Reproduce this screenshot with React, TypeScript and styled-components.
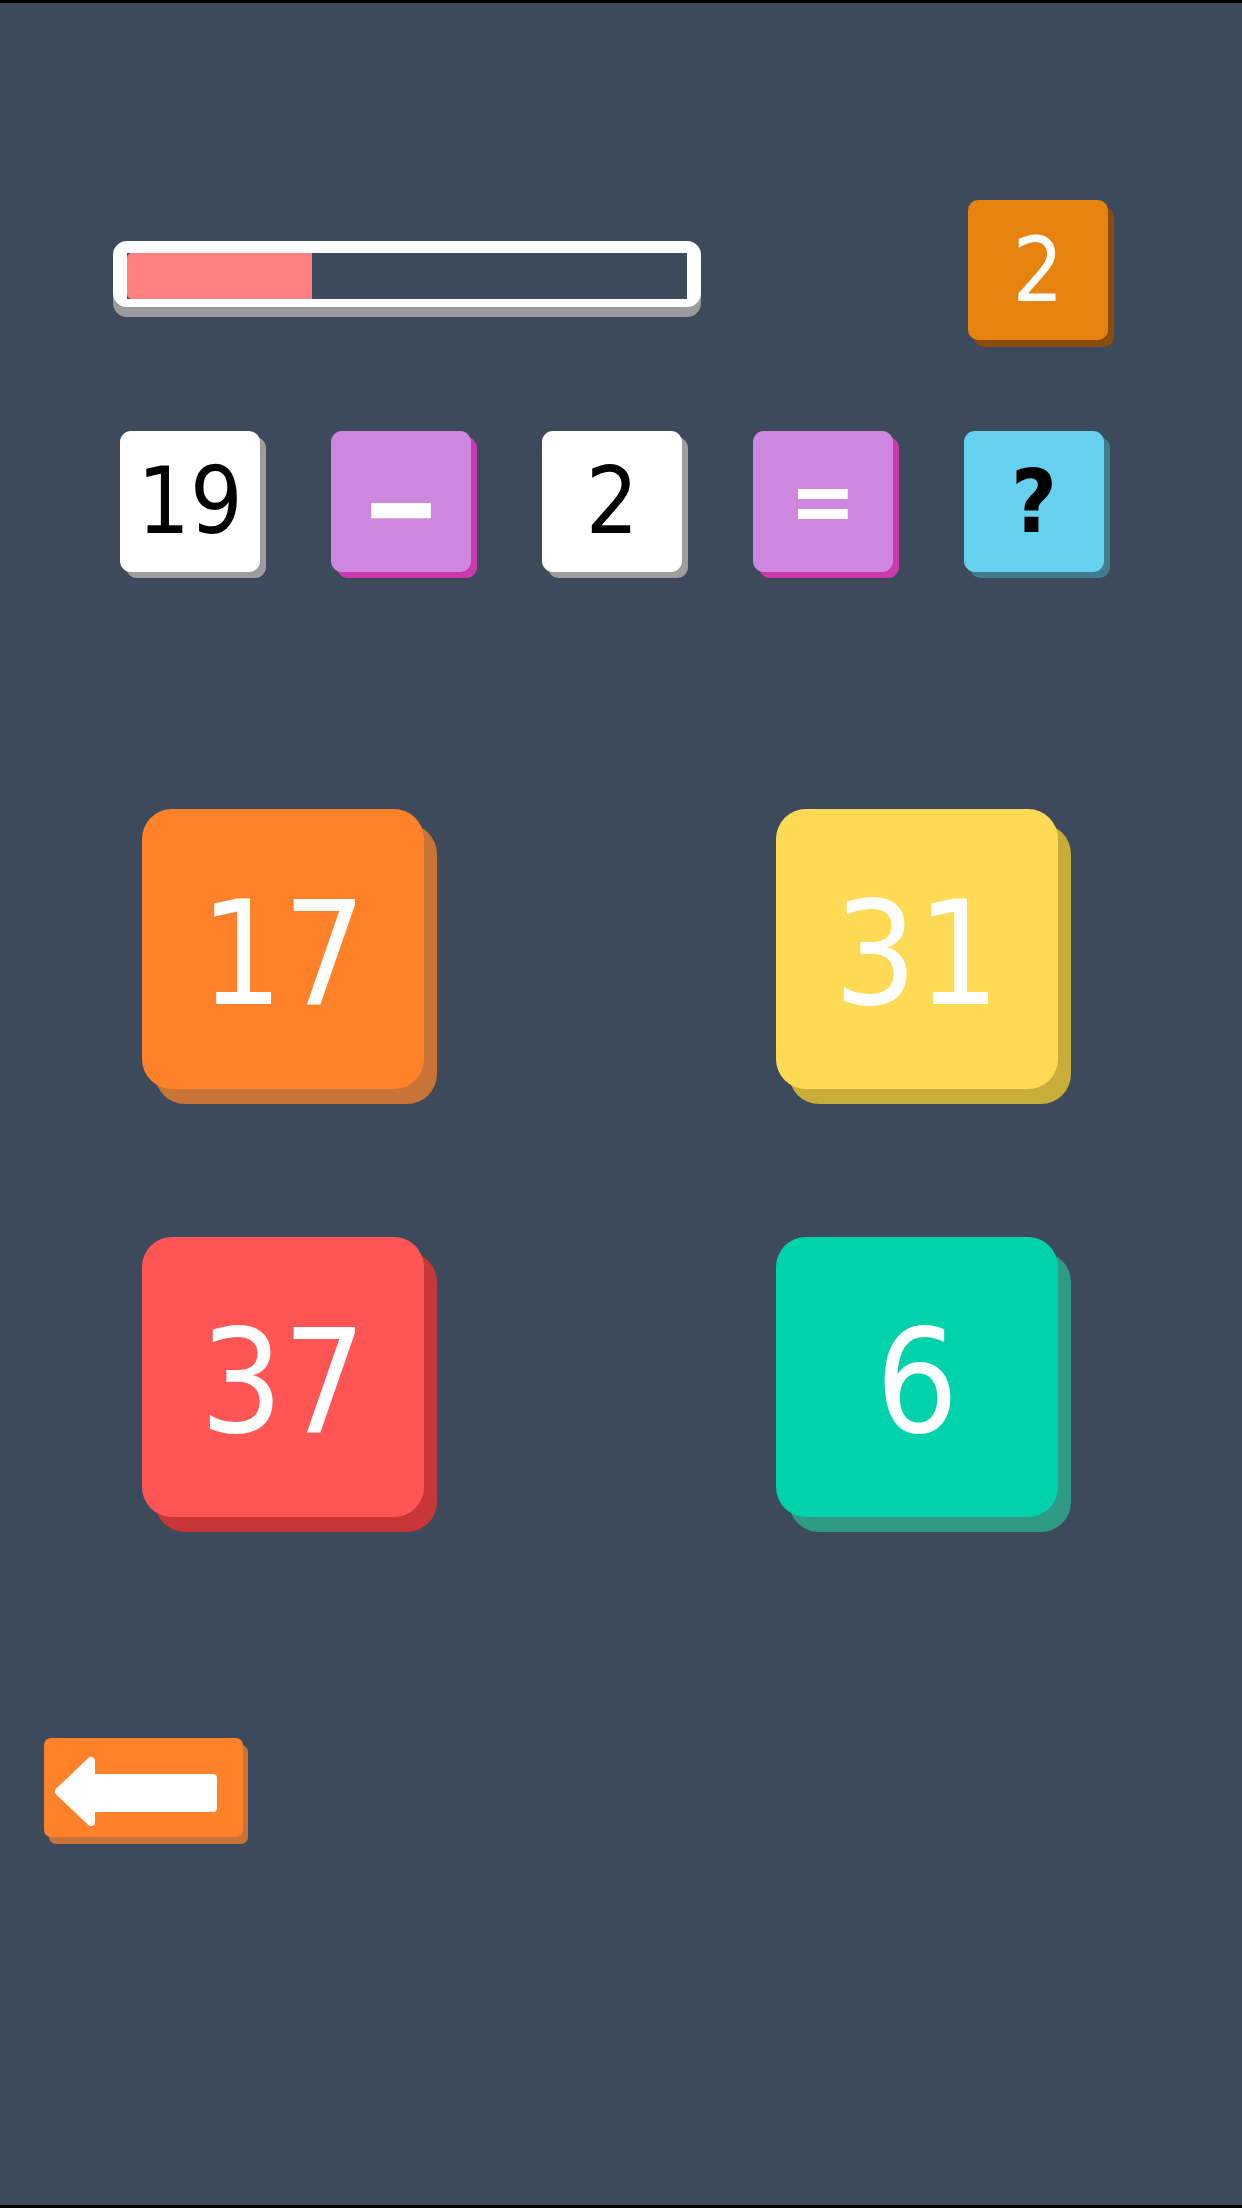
import styled, { createGlobalStyle } from "styled-components";

const GlobalStyle = createGlobalStyle`
  html, body {
    margin: 0;
    padding: 0;
    background: #3d4a5b;
  }
`;

const Screen = styled.div`
  width: 1242px;
  height: 2208px;
  box-sizing: border-box;
  border-top: 3px solid #000;
  border-bottom: 3px solid #000;
  background: #3d4a5b;
  display: flex;
  flex-direction: column;
  font-family: "DejaVu Sans", "Liberation Sans", sans-serif;
  font-stretch: condensed;
`;

const Header = styled.div`
  display: flex;
  align-items: center;
  padding: 197px 0 0 113px;
`;

const ProgressTrack = styled.div`
  width: 588px;
  height: 66px;
  margin-top: 8px;
  box-sizing: border-box;
  border-style: solid;
  border-color: #fff;
  border-width: 12px 14px 8px 14px;
  border-radius: 14px;
  background: #3d4a5b;
  box-shadow: 0 10px 0 #9b9b9b;
  overflow: hidden;
  display: flex;
`;

const ProgressFill = styled.div<{ $pct: number }>`
  width: ${(p) => p.$pct}%;
  height: 100%;
  background: #ff8080;
  border-radius: 5px 0 0 5px;
`;

const Block = styled.div<{ $bg: string; $shade: string }>`
  display: flex;
  align-items: center;
  justify-content: center;
  flex-shrink: 0;
  box-sizing: border-box;
  background: ${(p) => p.$bg};
  line-height: 1;
  user-select: none;
`;

const ScoreBadge = styled(Block)`
  width: 140px;
  height: 140px;
  margin-left: 267px;
  border-radius: 10px;
  box-shadow: 6px 7px 0 ${(p) => p.$shade};
  color: #fff;
  font-size: 89px;
`;

const Equation = styled.div`
  display: flex;
  gap: 71px;
  padding: 91px 0 0 120px;
`;

const EqTile = styled(Block)<{ $op?: boolean; $ink: string }>`
  width: 140px;
  height: 141px;
  border-radius: 11px;
  box-shadow: 6px 6px 0 ${(p) => p.$shade};
  color: ${(p) => p.$ink};
  font-size: ${(p) => (p.$op ? "88px" : "92px")};
  font-weight: ${(p) => (p.$op ? 700 : 400)};
`;

// the minus sign in the reference is a short, fat bar
const HeavyGlyph = styled.span`
  display: inline-block;
  transform: scale(1.2, 1.5);
  padding-top: 6px;
`;

const Answers = styled.div`
  display: grid;
  grid-template-columns: 282px 282px;
  column-gap: 352px;
  row-gap: 148px;
  padding: 237px 0 0 142px;
`;

const AnswerCard = styled(Block)`
  width: 282px;
  height: 280px;
  border-radius: 30px;
  box-shadow: 13px 15px 0 ${(p) => p.$shade};
  color: #fff;
  font-size: 145px;
  padding-top: 8px;
  cursor: pointer;
`;

const Footer = styled.div`
  display: flex;
  padding: 221px 0 0 44px;
`;

const BackButton = styled(Block)`
  width: 199px;
  height: 99px;
  border-radius: 7px;
  box-shadow: 5px 7px 0 ${(p) => p.$shade};
  cursor: pointer;
`;

const equation = [
  { text: "19", bg: "#ffffff", shade: "#9d9d9d", ink: "#000", op: false },
  { text: "−", bg: "#cd87de", shade: "#c93aad", ink: "#fff", op: true },
  { text: "2", bg: "#ffffff", shade: "#9d9d9d", ink: "#000", op: false },
  { text: "=", bg: "#cd87de", shade: "#c93aad", ink: "#fff", op: true },
  { text: "?", bg: "#66d1ee", shade: "#3f7c8d", ink: "#000", op: true },
];

const answers = [
  { value: 17, bg: "#ff822a", shade: "#c87436" },
  { value: 31, bg: "#ffdb55", shade: "#c8ad3a" },
  { value: 37, bg: "#ff5555", shade: "#c83737" },
  { value: 6, bg: "#00d3ab", shade: "#2f9b84" },
];

function BackArrow() {
  return (
    <svg width="199" height="99" viewBox="0 0 199 99">
      <path
        d="M15 53.5 L47 23 L47 40 L169 40 L169 70 L47 70 L47 84 Z"
        fill="#fff"
        stroke="#fff"
        strokeWidth="8"
        strokeLinejoin="round"
      />
    </svg>
  );
}

export default function App() {
  return (
    <>
      <GlobalStyle />
      <Screen>
        <Header>
          <ProgressTrack>
            <ProgressFill $pct={33} />
          </ProgressTrack>
          <ScoreBadge $bg="#e6820e" $shade="#8a4c0c">
            2
          </ScoreBadge>
        </Header>

        <Equation>
          {equation.map((item, i) => (
            <EqTile
              key={i}
              $bg={item.bg}
              $shade={item.shade}
              $ink={item.ink}
              $op={item.op}
            >
              {item.text === "−" ? <HeavyGlyph>{item.text}</HeavyGlyph> : item.text}
            </EqTile>
          ))}
        </Equation>

        <Answers>
          {answers.map((a) => (
            <AnswerCard key={a.value} $bg={a.bg} $shade={a.shade}>
              {a.value}
            </AnswerCard>
          ))}
        </Answers>

        <Footer>
          <BackButton $bg="#ff822a" $shade="#c87436">
            <BackArrow />
          </BackButton>
        </Footer>
      </Screen>
    </>
  );
}
